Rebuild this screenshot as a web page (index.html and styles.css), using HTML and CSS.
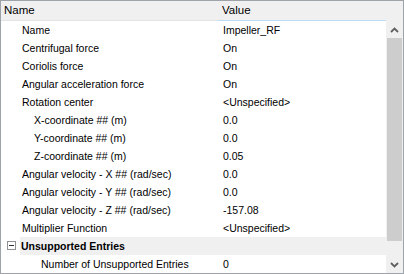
FILE: index.html
```html
<!DOCTYPE html>
<html lang="en">
  <head>
    <meta charset="UTF-8" />
    <title>Properties</title>
    <link rel="stylesheet" href="styles.css">
  </head>
  <body>
    <div class="grid">
      <div class="grid-header">
        <div class="col-name">Name</div>
        <div class="col-value">Value</div>
        <div class="col-pad"></div>
      </div>
      <div class="grid-body">
        <div class="rows">
          <div class="row"><div class="label">Name</div><div class="value">Impeller_RF</div></div>
          <div class="row"><div class="label">Centrifugal force</div><div class="value">On</div></div>
          <div class="row"><div class="label">Coriolis force</div><div class="value">On</div></div>
          <div class="row"><div class="label">Angular acceleration force</div><div class="value">On</div></div>
          <div class="row"><div class="label">Rotation center</div><div class="value">&lt;Unspecified&gt;</div></div>
          <div class="row"><div class="label sub">X-coordinate ## (m)</div><div class="value">0.0</div></div>
          <div class="row"><div class="label sub">Y-coordinate ## (m)</div><div class="value">0.0</div></div>
          <div class="row"><div class="label sub">Z-coordinate ## (m)</div><div class="value">0.05</div></div>
          <div class="row"><div class="label">Angular velocity - X ## (rad/sec)</div><div class="value">0.0</div></div>
          <div class="row"><div class="label">Angular velocity - Y ## (rad/sec)</div><div class="value">0.0</div></div>
          <div class="row"><div class="label">Angular velocity - Z ## (rad/sec)</div><div class="value">-157.08</div></div>
          <div class="row"><div class="label">Multiplier Function</div><div class="value">&lt;Unspecified&gt;</div></div>
          <div class="row section">
            <span class="toggle"></span>
            <div class="section-title">Unsupported Entries</div>
          </div>
          <div class="row"><div class="label deep">Number of Unsupported Entries</div><div class="value">0</div></div>
        </div>
        <div class="scrollbar">
          <div class="arrow">
            <svg width="9" height="6" viewBox="0 0 9 6"><polyline points="1,5 4.5,1.5 8,5" fill="none" stroke="#606060" stroke-width="1.8"/></svg>
          </div>
          <div class="track"><div class="thumb"></div></div>
          <div class="arrow">
            <svg width="9" height="6" viewBox="0 0 9 6"><polyline points="1,1 4.5,4.5 8,1" fill="none" stroke="#606060" stroke-width="1.8"/></svg>
          </div>
        </div>
      </div>
    </div>
  </body>
</html>
```

FILE: styles.css
```css
* {
  margin: 0;
  padding: 0;
  box-sizing: border-box;
}

body {
  font-family: "Liberation Sans", Arial, sans-serif;
  font-size: 10.5px;
  color: #000;
  background: #fff;
}

.grid {
  width: 404px;
  height: 274px;
  border: 1px solid #9ea3aa;
  display: flex;
  flex-direction: column;
  overflow: hidden;
}

.grid-header {
  display: flex;
  height: 20px;
  background: #f0f0f0;
  font-size: 11.5px;
}

.col-name {
  width: 217px;
  padding: 3px 0 0 3px;
  border-bottom: 1px solid #e3e3e3;
}

.col-value {
  flex: 1;
  padding: 3px 0 0 4px;
  border-bottom: 1px solid #bcdcf4;
}

.col-pad {
  width: 17px;
}

.grid-body {
  flex: 1;
  display: flex;
  min-height: 0;
}

.rows {
  flex: 1;
  overflow: hidden;
}

.row {
  display: flex;
  align-items: center;
  height: 18px;
}

.label {
  width: 217px;
  padding-left: 21px;
  white-space: nowrap;
}

.label.sub {
  padding-left: 33px;
}

.label.deep {
  padding-left: 40px;
}

.value {
  flex: 1;
  padding-left: 5px;
  white-space: nowrap;
}

.section {
  position: relative;
}

.section-title {
  flex: 1;
  height: 100%;
  margin-left: 19px;
  padding-left: 1px;
  display: flex;
  align-items: center;
  background: #f0f0f0;
  font-weight: bold;
}

.toggle {
  position: absolute;
  left: 6px;
  top: 4px;
  width: 9px;
  height: 9px;
  border: 1px solid #919191;
  background: #fff;
}

.toggle::after {
  content: "";
  position: absolute;
  left: 1px;
  top: 3px;
  width: 5px;
  height: 1px;
  background: #333;
}

.scrollbar {
  width: 17px;
  display: flex;
  flex-direction: column;
  background: #f0f0f0;
}

.arrow {
  height: 17px;
  display: flex;
  align-items: center;
  justify-content: center;
}

.track {
  flex: 1;
  padding: 0 1px;
}

.thumb {
  height: 203px;
  background: #cdcdcd;
}
```
